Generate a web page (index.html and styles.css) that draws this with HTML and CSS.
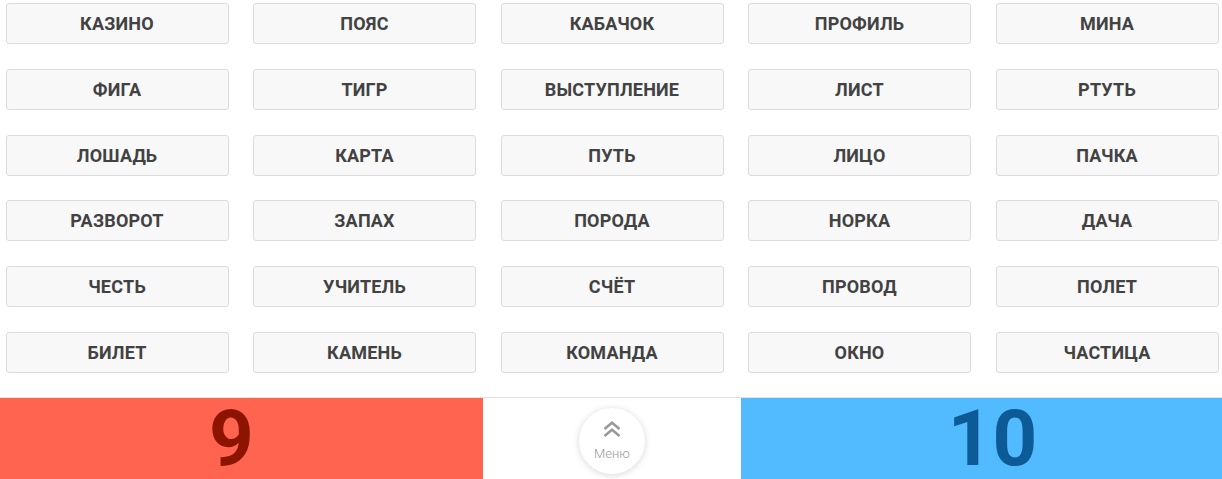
FILE: index.html
```html
<!DOCTYPE html>
<html lang="ru">
<head>
<meta charset="utf-8">
<link rel="stylesheet" href="styles.css">
</head>
<body>
<div class="page">
  <div class="grid">
    <button class="word">Казино</button>
    <button class="word">Пояс</button>
    <button class="word">Кабачок</button>
    <button class="word">Профиль</button>
    <button class="word">Мина</button>
    <button class="word">Фига</button>
    <button class="word">Тигр</button>
    <button class="word">Выступление</button>
    <button class="word">Лист</button>
    <button class="word">Ртуть</button>
    <button class="word">Лошадь</button>
    <button class="word">Карта</button>
    <button class="word">Путь</button>
    <button class="word">Лицо</button>
    <button class="word">Пачка</button>
    <button class="word">Разворот</button>
    <button class="word">Запах</button>
    <button class="word">Порода</button>
    <button class="word">Норка</button>
    <button class="word">Дача</button>
    <button class="word">Честь</button>
    <button class="word">Учитель</button>
    <button class="word">Счёт</button>
    <button class="word">Провод</button>
    <button class="word">Полет</button>
    <button class="word">Билет</button>
    <button class="word">Камень</button>
    <button class="word">Команда</button>
    <button class="word">Окно</button>
    <button class="word">Частица</button>
  </div>
  <div class="footer">
    <div class="score score-red"><span>9</span></div>
    <div class="menu-cell">
      <div class="menu-btn">
        <svg class="chev" width="20" height="16" viewBox="0 0 20 16">
          <path d="M2.5 8 L10 1.8 L17.5 8" fill="none" stroke="#9a9a9a" stroke-width="2.6"/>
          <path d="M2.5 15 L10 8.8 L17.5 15" fill="none" stroke="#9a9a9a" stroke-width="2.6"/>
        </svg>
        <span class="menu-label">Меню</span>
      </div>
    </div>
    <div class="score score-blue"><span>10</span></div>
  </div>
</div>
</body>
</html>
```
FILE: styles.css
```css
* { box-sizing: border-box; }
html, body {
  margin: 0;
  padding: 0;
  background: #fff;
  font-family: Roboto, "Liberation Sans", sans-serif;
}
.page {
  width: 1222px;
  height: 479px;
  overflow: hidden;
  display: flex;
  flex-direction: column;
}
.grid {
  display: grid;
  grid-template-columns: repeat(5, 223px);
  grid-auto-rows: 41px;
  column-gap: 24.5px;
  row-gap: 24.8px;
  padding: 3px 0 0 5.5px;
  height: 397px;
}
.word {
  margin: 0;
  border: 1px solid #dcdcdc;
  border-radius: 3px;
  background: #f8f8f8;
  color: #424242;
  font-family: Roboto, "Liberation Sans", sans-serif;
  font-weight: 700;
  font-size: 18px;
  letter-spacing: 0.2px;
  text-transform: uppercase;
  display: flex;
  align-items: center;
  justify-content: center;
  padding: 0;
}
.footer {
  display: flex;
  height: 82px;
  border-top: 1px solid #e2e2e2;
}
.score {
  display: flex;
  align-items: center;
  justify-content: center;
  font-weight: 700;
  font-size: 78px;
  line-height: 81px;
}
.score span { display: block; line-height: 81px; }
.score-red {
  width: 483px;
  background: #ff6450;
  color: #8c1400;
  padding-right: 20px;
}
.score-blue {
  width: 481px;
  background: #52baff;
  color: #0c5a96;
  padding-left: 22px;
}
.menu-cell {
  width: 258px;
  background: #fff;
  display: flex;
  justify-content: center;
  padding-top: 10px;
}
.menu-btn {
  width: 66px;
  height: 66px;
  border-radius: 50%;
  background: #fff;
  box-shadow: 0 1px 7px rgba(0,0,0,0.16);
  display: flex;
  flex-direction: column;
  align-items: center;
  padding-top: 13px;
}
.chev { display: block; }
.menu-label {
  margin-top: 9px;
  font-size: 13px;
  line-height: 15px;
  color: #999;
  font-weight: 300;
}
```
